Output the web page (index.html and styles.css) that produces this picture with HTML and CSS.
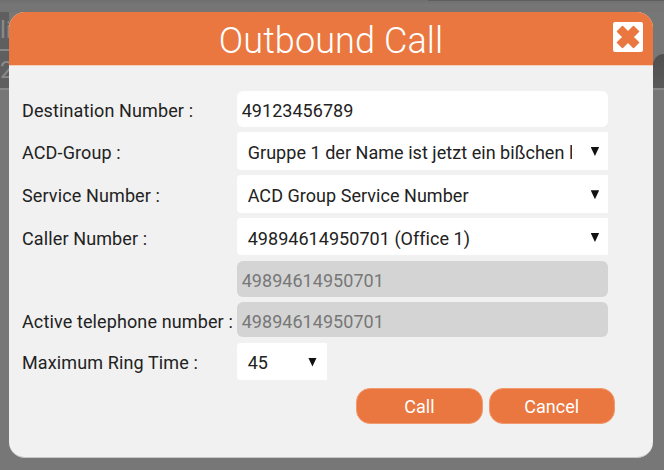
FILE: index.html
```html
<!DOCTYPE html>
<html lang="en">
<head>
<meta charset="utf-8">
<title>Outbound Call</title>
<link rel="stylesheet" href="styles.css">
</head>
<body>
<div class="backdrop">
  <div class="bg-top"><div class="bg-top-line"></div></div>
  <div class="bg-left">
    <div class="bg-cell bg-one">li</div>
    <div class="bg-cell bg-two">2</div>
  </div>
  <div class="bg-right"></div>
</div>
<section class="dialog">
  <header class="dialog-head">
    <h1 class="dialog-title">Outbound Call</h1>
    <button class="close" type="button" aria-label="Close">
      <svg viewBox="0 0 30 30" width="30" height="30" aria-hidden="true">
        <rect width="30" height="30" rx="2" fill="#fff"/>
        <path d="M4.500 9.500 9.500 4.500 15 10 20.500 4.500 25.500 9.500 20 15 25.500 20.500 20.500 25.500 15 20 9.500 25.500 4.500 20.500 10 15Z" fill="#ea7740" stroke="#ea7740" stroke-width="1.500" stroke-linejoin="round"/>
      </svg>
    </button>
  </header>
  <form class="form">
    <div class="row r1"><label class="label">Destination Number :</label><input class="field" value="49123456789"></div>
    <div class="row r2"><label class="label">ACD-Group :</label><span class="select-wrap"><select class="select"><option>Gruppe 1 der Name ist jetzt ein bißchen länger</option></select></span></div>
    <div class="row r3"><label class="label">Service Number :</label><span class="select-wrap"><select class="select"><option>ACD Group Service Number</option></select></span></div>
    <div class="row r3"><label class="label">Caller Number :</label><span class="select-wrap"><select class="select"><option>49894614950701 (Office 1)</option></select></span></div>
    <div class="row r5"><span class="label"></span><input class="field off" value="49894614950701" readonly></div>
    <div class="row r6"><label class="label">Active telephone number :</label><input class="field off" value="49894614950701" readonly></div>
    <div class="row r3"><label class="label">Maximum Ring Time :</label><span class="select-wrap small"><select class="select"><option>45</option></select></span></div>
    <div class="actions">
      <button class="btn" type="button">Call</button>
      <button class="btn" type="button">Cancel</button>
    </div>
  </form>
</section>
</body>
</html>
```
FILE: styles.css
```css
* { box-sizing: border-box; }
html, body { margin: 0; height: 100%; }
body {
  position: relative;
  width: 664px;
  height: 470px;
  overflow: hidden;
  background: #777;
  font-family: Roboto, "Liberation Sans", sans-serif;
  color: #222;
}
.backdrop { position: absolute; inset: 0; }
.bg-top { height: 12px; background: linear-gradient(#6f6f6f, #767676 40%, #747474); }
.bg-top-line { height: 1px; margin-left: 428px; background: #5f5f5f; }
.bg-left { width: 9px; overflow: hidden; }
.bg-cell { color: #8a8a8a; font-size: 24px; white-space: nowrap; background: #5f5f5f; border-bottom: 2px solid #888; }
.bg-one { height: 39px; line-height: 36px; }
.bg-two { height: 39px; line-height: 38px; }
.bg-right {
  position: absolute;
  top: 54px;
  left: 653px;
  width: 11px;
  height: 36px;
  background: linear-gradient(#4f4f4f, #5a5a5a);
  border-top-left-radius: 12px;
  border-bottom: 2px solid #888;
}
.dialog {
  position: absolute;
  left: 9px;
  top: 12px;
  width: 644px;
  height: 446px;
  background: #f1f1f1;
  border-radius: 16px;
  overflow: hidden;
  border-bottom: 1px solid #c8c8c8;
}
.dialog-head {
  position: relative;
  height: 54px;
  background: #ea7740;
  border-bottom: 1px solid #f0d0be;
  display: flex;
  align-items: center;
  justify-content: center;
}
.dialog-title {
  margin: 0;
  padding-top: 6px;
  font-size: 36px;
  font-weight: 300;
  letter-spacing: 0.1px;
  color: #fff;
  line-height: 47px;
}
.close {
  position: absolute;
  top: 10px;
  right: 10px;
  width: 30px;
  height: 30px;
  padding: 0;
  border: 0;
  background: none;
  line-height: 0;
}
.form { padding: 25px 0 0 13px; }
.row { display: flex; align-items: center; margin-bottom: 5.300px; }
.r1 { height: 35.600px; }
.r2 { height: 38px; }
.r3 { height: 37.400px; }
.r5 { height: 36px; }
.r6 { height: 35.400px; }
.label { width: 214.700px; flex: none; padding-top: 3px; font-size: 18px; letter-spacing: 0.12px; color: #222; white-space: nowrap; }
.field {
  width: 371.500px;
  height: 100%;
  border: 0;
  border-radius: 6px;
  background: #fff;
  padding: 3px 5px 0;
  font: 18px Roboto, sans-serif;
  letter-spacing: 0.04px;
  color: #222;
  outline: 0;
}
.off { background: #d4d4d4; color: #777; }
.select-wrap { position: relative; display: block; width: 371.500px; height: 100%; }
.select-wrap.small { width: 90px; }
.select-wrap::after {
  content: "";
  position: absolute;
  right: 9px;
  top: 15px;
  width: 8.500px;
  height: 9px;
  background: #111;
  clip-path: polygon(0 0, 100% 0, 50% 100%);
  pointer-events: none;
}
.small::after { right: 10px; }
.select {
  appearance: none;
  width: 100%;
  height: 100%;
  border: 0;
  border-radius: 4px 0 0 4px;
  background: #fff;
  padding: 3px 36px 0 11px;
  font: 18px Roboto, sans-serif;
  letter-spacing: 0.04px;
  color: #222;
  outline: 0;
}
.actions { display: flex; gap: 6px; margin: 8.300px 0 0 334.300px; }
.btn {
  width: 126.300px;
  height: 36px;
  padding-top: 2px;
  border: 1px solid #f09a6e;
  border-radius: 14px;
  background: #ea7740;
  color: #fff;
  font: 18px Roboto, sans-serif;
}
```
